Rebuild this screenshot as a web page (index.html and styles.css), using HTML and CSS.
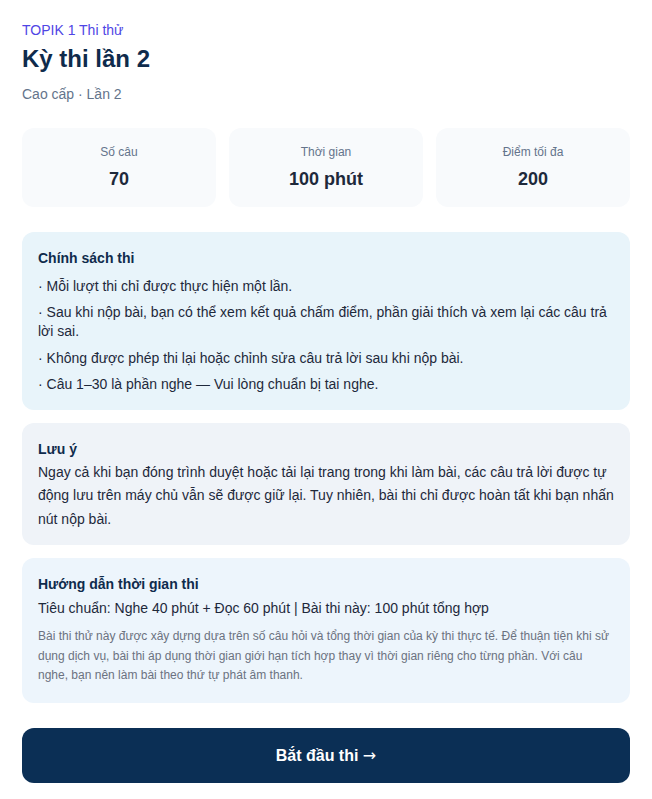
FILE: index.html
```html
<!DOCTYPE html>
<html lang="vi">
<head>
<meta charset="utf-8">
<title>Kỳ thi lần 2</title>
<link rel="stylesheet" href="styles.css">
</head>
<body>
<main class="page">
  <header class="head">
    <div class="eyebrow">TOPIK 1 Thi thử</div>
    <h1 class="title">Kỳ thi lần 2</h1>
    <div class="sub">Cao cấp · Lần 2</div>
  </header>

  <section class="stats">
    <div class="stat"><div class="stat-label">Số câu</div><div class="stat-value">70</div></div>
    <div class="stat"><div class="stat-label">Thời gian</div><div class="stat-value">100 phút</div></div>
    <div class="stat"><div class="stat-label">Điểm tối đa</div><div class="stat-value">200</div></div>
  </section>

  <section class="box box-policy">
    <h2 class="box-title">Chính sách thi</h2>
    <ul class="policy">
      <li>· Mỗi lượt thi chỉ được thực hiện một lần.</li>
      <li>· Sau khi nộp bài, bạn có thể xem kết quả chấm điểm, phần giải thích và xem lại các câu trả lời sai.</li>
      <li>· Không được phép thi lại hoặc chỉnh sửa câu trả lời sau khi nộp bài.</li>
      <li>· Câu 1–30 là phần nghe — Vui lòng chuẩn bị tai nghe.</li>
    </ul>
  </section>

  <section class="box box-note">
    <h2 class="box-title">Lưu ý</h2>
    <p class="note-text">Ngay cả khi bạn đóng trình duyệt hoặc tải lại trang trong khi làm bài, các câu trả lời được tự động lưu trên máy chủ vẫn sẽ được giữ lại. Tuy nhiên, bài thi chỉ được hoàn tất khi bạn nhấn nút nộp bài.</p>
  </section>

  <section class="box box-guide">
    <h2 class="box-title">Hướng dẫn thời gian thi</h2>
    <p class="guide-main">Tiêu chuẩn: Nghe 40 phút + Đọc 60 phút | Bài thi này: 100 phút tổng hợp</p>
    <p class="guide-small">Bài thi thử này được xây dựng dựa trên số câu hỏi và tổng thời gian của kỳ thi thực tế. Để thuận tiện khi sử dụng dịch vụ, bài thi áp dụng thời gian giới hạn tích hợp thay vì thời gian riêng cho từng phần. Với câu nghe, bạn nên làm bài theo thứ tự phát âm thanh.</p>
  </section>

  <button class="start" type="button">Bắt đầu thi <span class="arrow">→</span></button>
</main>
</body>
</html>
```

FILE: styles.css
```css
* { box-sizing: border-box; }
html, body { margin: 0; padding: 0; background: #ffffff; }
body {
  font-family: "Liberation Sans", Arial, sans-serif;
  color: #1e293b;
}
.page {
  width: 608px;
  margin: 0 auto;
  padding: 21px 0 16px;
  display: flex;
  flex-direction: column;
}
.head { display: flex; flex-direction: column; }
.eyebrow {
  font-size: 14px;
  line-height: 18px;
  color: #4f46e5;
}
.title {
  margin: 5px 0 0;
  font-size: 24px;
  line-height: 30px;
  font-weight: 700;
  color: #0f2b4c;
}
.sub {
  margin-top: 11px;
  font-size: 14px;
  line-height: 18px;
  color: #64748b;
}
.stats {
  margin-top: 25px;
  display: grid;
  grid-template-columns: repeat(3, 1fr);
  gap: 13px;
}
.stat {
  background: #f8fafc;
  border-radius: 12px;
  height: 79px;
  padding-top: 16px;
  text-align: center;
}
.stat-label {
  font-size: 12px;
  line-height: 16px;
  color: #64748b;
}
.stat-value {
  margin-top: 8px;
  font-size: 18px;
  line-height: 22px;
  font-weight: 700;
  color: #1e293b;
}
.box {
  border-radius: 12px;
  padding: 16px;
}
.box-policy { margin-top: 25px; background: #e8f4fa; padding-bottom: 15.5px; }
.box-note { margin-top: 13px; background: #eff3f8; padding-bottom: 14px; }
.box-guide { margin-top: 13px; background: #edf5fc; padding-bottom: 17px; }
.box-title {
  margin: 0;
  font-size: 14px;
  line-height: 20px;
  font-weight: 700;
  color: #0f2b4c;
}
.policy {
  list-style: none;
  margin: 8.5px 0 0;
  padding: 0;
  display: flex;
  flex-direction: column;
  gap: 7.5px;
}
.policy li {
  font-size: 14px;
  line-height: 19px;
  color: #1e293b;
}
.note-text {
  margin: 2px 0 0;
  font-size: 14px;
  line-height: 23.5px;
  color: #1e293b;
}
.guide-main {
  margin: 4px 0 0;
  font-size: 14px;
  line-height: 20px;
  color: #1e293b;
}
.guide-small {
  margin: 9px 0 0;
  font-size: 12px;
  line-height: 19.5px;
  color: #6b7280;
}
.start {
  margin-top: 25px;
  height: 55px;
  border: 0;
  border-radius: 12px;
  background: #0b2f55;
  color: #ffffff;
  font-family: "Liberation Sans", Arial, sans-serif;
  font-size: 16px;
  font-weight: 700;
  cursor: pointer;
}
.arrow {
  font-family: "DejaVu Sans", sans-serif;
  font-weight: 400;
}
```
